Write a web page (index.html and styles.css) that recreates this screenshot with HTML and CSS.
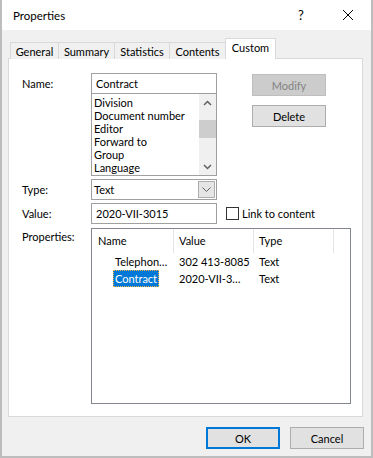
FILE: index.html
```html
<!DOCTYPE html>
<html>
<head>
  <title>Properties</title>
  <link rel="stylesheet" href="styles.css">
</head>
<body>
  <div class="dialog">
    <div class="titlebar">
      <span class="title">Properties</span>
      <span class="help">?</span>
      <span class="close">
        <svg width="12" height="12" viewBox="0 0 12 12"><path d="M1 1L11 11M11 1L1 11" stroke="#000" stroke-width="1" fill="none"/></svg>
      </span>
    </div>

    <div class="body">
      <div class="tabs">
        <div class="tab tab-general">General</div>
        <div class="tab tab-summary">Summary</div>
        <div class="tab tab-statistics">Statistics</div>
        <div class="tab tab-contents">Contents</div>
        <div class="tab tab-custom active">Custom</div>
      </div>

      <div class="panel">
        <div class="top">
          <div class="label">Name:</div>
          <div class="name-col">
            <div class="textbox">Contract</div>
            <div class="listbox">
              <div class="items">
                <div>Division</div>
                <div>Document number</div>
                <div>Editor</div>
                <div>Forward to</div>
                <div>Group</div>
                <div>Language</div>
              </div>
              <div class="vscroll">
                <div class="arrow">
                  <svg width="9" height="6" viewBox="0 0 9 6"><path d="M1 5L4.5 1.5L8 5" stroke="#606060" stroke-width="1.5" fill="none"/></svg>
                </div>
                <div class="track"><div class="thumb"></div></div>
                <div class="arrow">
                  <svg width="9" height="6" viewBox="0 0 9 6"><path d="M1 1L4.5 4.5L8 1" stroke="#606060" stroke-width="1.5" fill="none"/></svg>
                </div>
              </div>
            </div>
          </div>
          <div class="actions">
            <button class="btn" disabled>Modify</button>
            <button class="btn">Delete</button>
          </div>
        </div>

        <div class="row row-type">
          <div class="label">Type:</div>
          <div class="combo">
            <span>Text</span>
            <div class="combo-btn">
              <svg width="9" height="5" viewBox="0 0 9 5"><path d="M0.5 0.5L4.5 4.5L8.5 0.5" stroke="#606060" stroke-width="1" fill="none"/></svg>
            </div>
          </div>
        </div>

        <div class="row row-value">
          <div class="label">Value:</div>
          <div class="textbox">2020-VII-3015</div>
          <div class="check"><span class="box"></span>Link to content</div>
        </div>

        <div class="row row-props">
          <div class="label">Properties:</div>
          <div class="listview">
            <div class="lv-head">
              <div class="col col-name">Name</div>
              <div class="col col-value">Value</div>
              <div class="col col-type">Type</div>
            </div>
            <div class="lv-row">
              <div class="col col-name"><span class="cell">Telephon…</span></div>
              <div class="col col-value">302 413-8085</div>
              <div class="col col-type">Text</div>
            </div>
            <div class="lv-row">
              <div class="col col-name"><span class="cell selected">Contract</span></div>
              <div class="col col-value">2020-VII-3…</div>
              <div class="col col-type">Text</div>
            </div>
          </div>
        </div>
      </div>

      <div class="footer">
        <button class="btn default">OK</button>
        <button class="btn">Cancel</button>
      </div>
    </div>
  </div>
</body>
</html>
```

FILE: styles.css
```css
body {
  margin: 0;
  font-family: Lato, "Noto Sans", sans-serif;
  font-size: 11px;
  color: #000;
  background-color: #fff;
}

.dialog {
  width: 373px;
  height: 458px;
  box-sizing: border-box;
  border: 2px solid #bdbdbd;
  border-top: none;
  background-color: #f0f0f0;
}

.titlebar {
  height: 30px;
  display: flex;
  align-items: center;
  background-color: #fff;
  padding-left: 11px;
  font-size: 11.5px;
}

.title {
  flex: 1;
}

.help {
  width: 12px;
  font-size: 13px;
  margin-right: 32px;
}

.close {
  display: flex;
  margin-right: 17px;
}

.body {
  padding: 8px 0 0 6px;
}

/* tabs */
.tabs {
  display: flex;
  align-items: flex-end;
  height: 21px;
  padding-left: 2px;
  margin-bottom: -1px;
  position: relative;
  z-index: 1;
}

.tab {
  height: 17px;
  box-sizing: border-box;
  border: 1px solid #d9d9d9;
  border-right: none;
  border-bottom: none;
  text-align: center;
  line-height: 17px;
  background-color: #f0f0f0;
}

.tab-general { width: 48px; }
.tab-summary { width: 56px; }
.tab-statistics { width: 55px; }
.tab-contents { width: 56px; }

.tab.active {
  width: 51px;
  height: 21px;
  border-right: 1px solid #d9d9d9;
  background-color: #fff;
  line-height: 17px;
}

.panel {
  width: 355px;
  height: 359px;
  box-sizing: border-box;
  background-color: #fff;
  border: 1px solid #d9d9d9;
  padding: 14px 0 0 13px;
}

.label {
  width: 69px;
  flex-shrink: 0;
}

/* name block */
.top {
  display: flex;
}

.top .label {
  line-height: 21px;
}

.name-col {
  width: 126px;
}

.textbox {
  width: 126px;
  height: 21px;
  box-sizing: border-box;
  border: 1px solid #a0a0a0;
  padding-left: 4px;
  line-height: 19px;
}

.listbox {
  display: flex;
  height: 82px;
  box-sizing: border-box;
  border: 1px solid #a0a0a0;
  border-top: none;
}

.items {
  flex: 1;
  padding: 2px 0 0 2px;
  line-height: 13px;
}

.vscroll {
  width: 17px;
  display: flex;
  flex-direction: column;
  background-color: #f0f0f0;
}

.arrow {
  height: 17px;
  display: flex;
  align-items: center;
  justify-content: center;
}

.track {
  flex: 1;
  padding-top: 9px;
}

.thumb {
  height: 18px;
  background-color: #cdcdcd;
}

.actions {
  display: flex;
  flex-direction: column;
  gap: 9px;
  margin-left: 35px;
  padding-top: 1px;
}

.btn {
  width: 74px;
  height: 22px;
  box-sizing: border-box;
  border: 1px solid #adadad;
  background-color: #e1e1e1;
  font-family: inherit;
  font-size: 11px;
  color: #000;
  padding: 0;
}

.btn:disabled {
  background-color: #cccccc;
  border-color: #bfbfbf;
  color: #838383;
}

.btn.default {
  border: 2px solid #0078d7;
}

/* form rows */
.row {
  display: flex;
  align-items: center;
}

.row-type {
  margin-top: 3px;
}

.row-value {
  margin-top: 3px;
}

.combo {
  width: 126px;
  height: 21px;
  box-sizing: border-box;
  border: 1px solid #a0a0a0;
  display: flex;
  align-items: center;
  justify-content: space-between;
  padding: 0 1px 0 2px;
}

.combo-btn {
  width: 17px;
  height: 17px;
  box-sizing: border-box;
  border: 1px solid #adadad;
  background-color: #e5e5e5;
  display: flex;
  align-items: center;
  justify-content: center;
}

.check {
  display: flex;
  align-items: center;
  margin-left: 9px;
}

.box {
  width: 13px;
  height: 13px;
  box-sizing: border-box;
  border: 1px solid #333;
  margin-right: 3px;
}

.row-props {
  margin-top: 4px;
  align-items: flex-start;
}

.row-props .label {
  padding-top: 2px;
}

/* list view */
.listview {
  width: 260px;
  height: 176px;
  box-sizing: border-box;
  border: 1px solid #828790;
}

.lv-head {
  display: flex;
  height: 24px;
  line-height: 24px;
}

.lv-head .col {
  border-right: 1px solid #e5e5e5;
}

.lv-row {
  display: flex;
  height: 17px;
  line-height: 17px;
}

.col {
  box-sizing: border-box;
  white-space: nowrap;
  padding-left: 5px;
}

.col-name { width: 82px; padding-left: 6px; }
.col-value { width: 80px; }
.col-type { width: 80px; }

.lv-row .col-name {
  padding-left: 21px;
}

.cell {
  display: inline-block;
  padding: 0 2px;
  height: 17px;
  box-sizing: border-box;
}

.cell.selected {
  background-color: #0078d7;
  color: #fff;
  outline: 1px dotted #f4b040;
  outline-offset: -1px;
}

.footer {
  display: flex;
  justify-content: flex-end;
  gap: 10px;
  padding: 10px 7px 0 0;
}
```
